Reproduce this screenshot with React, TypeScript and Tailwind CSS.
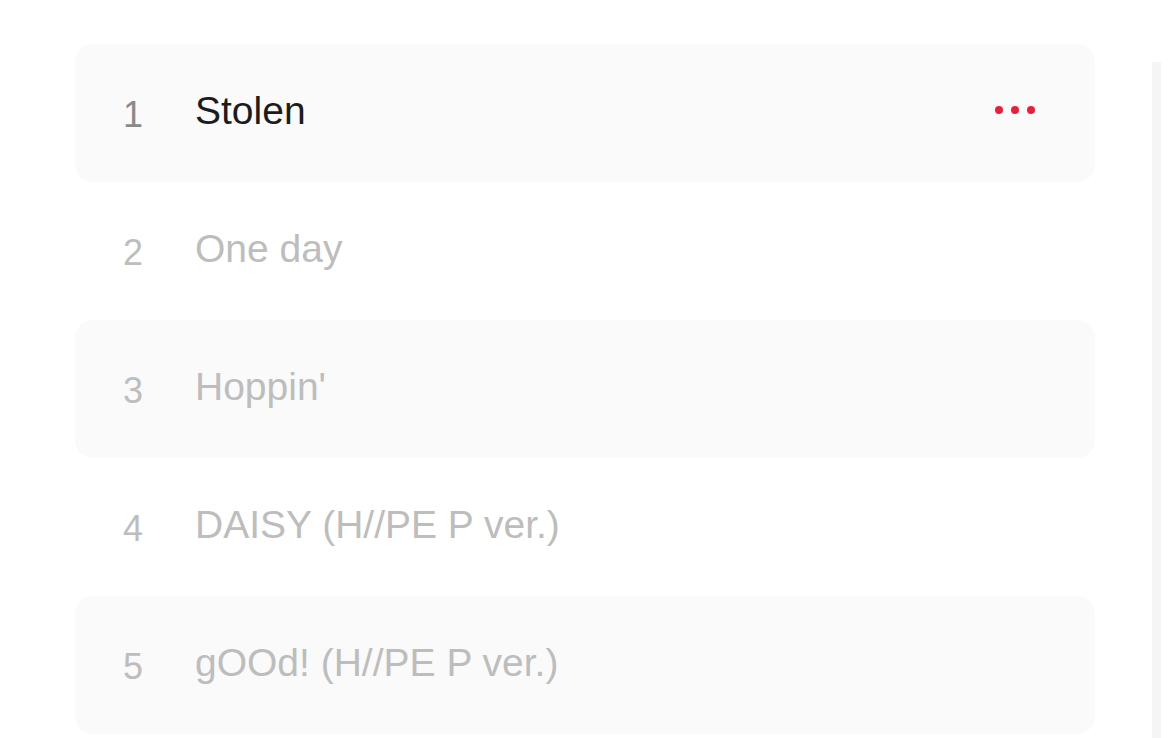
const tracks = [
  { n: 1, title: "Stolen", active: true },
  { n: 2, title: "One day" },
  { n: 3, title: "Hoppin'" },
  { n: 4, title: "DAISY (H//PE P ver.)" },
  { n: 5, title: "gOOd! (H//PE P ver.)" },
];

function Row({ n, title, active, shaded }: { n: number; title: string; active?: boolean; shaded: boolean }) {
  return (
    <div
      className={`h-[138px] flex items-center pl-[48px] pr-[60px] rounded-[18px] ${shaded ? "bg-[#fafafa]" : "bg-white"}`}
    >
      <span className={`w-[72px] text-[36px] mt-[4px] ${active ? "text-[#8a8a8a]" : "text-[#bdbdbd]"}`}>{n}</span>
      <span className={`flex-1 text-[39px] mb-[4px] ${active ? "text-[#1c1c1c]" : "text-[#bdbdbd]"}`}>{title}</span>
      {active && (
        <div className="flex gap-[8px] items-center mb-[6px]">
          <span className="w-[8px] h-[8px] rounded-full bg-[#e8203a]" />
          <span className="w-[8px] h-[8px] rounded-full bg-[#e8203a]" />
          <span className="w-[8px] h-[8px] rounded-full bg-[#e8203a]" />
        </div>
      )}
    </div>
  );
}

export default function App() {
  return (
    <div className="w-[1170px] h-[738px] overflow-hidden bg-white flex font-['Liberation_Sans',Arial,sans-serif]">
      <div className="w-[1020px] ml-[75px] mt-[44px] flex flex-col">
        {tracks.map((t, i) => (
          <Row key={t.n} n={t.n} title={t.title} active={t.active} shaded={i % 2 === 0} />
        ))}
      </div>
      <div className="ml-[57px] mt-[62px] w-[9px] h-[676px] bg-[#f5f5f5]" />
    </div>
  );
}
